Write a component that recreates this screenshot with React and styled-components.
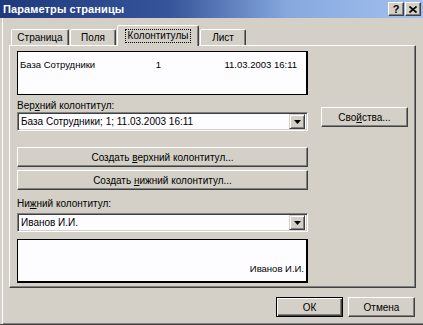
import React from 'react';
import styled, { createGlobalStyle } from 'styled-components';

const GlobalStyle = createGlobalStyle`
  html, body {
    margin: 0;
    padding: 0;
    background: #d4d0c8;
  }
  body {
    font-family: "Liberation Sans", Arial, sans-serif;
    font-size: 10px;
    color: #000;
  }
`;

const Window = styled.div`
  width: 423px;
  height: 325px;
  box-sizing: border-box;
  background: #d4d0c8;
  display: flex;
  flex-direction: column;
  border-bottom: 1px solid #404048;
  box-shadow: inset 2px 0 0 #d4d0c8, inset 3px 0 0 #ffffff, inset 0 -1px 0 #808080;
  overflow: hidden;
`;

const TitleBar = styled.div`
  height: 18px;
  display: flex;
  align-items: center;
  padding: 0 2px 0 3px;
  background: linear-gradient(to right, #1f3a7c 0%, #35549a 40%, #86a8de 68%, #a3c1ef 100%);
`;

const Title = styled.div`
  flex: 1;
  color: #fff;
  font-weight: bold;
  font-size: 11px;
  letter-spacing: 0.1px;
`;

const CaptionButton = styled.div`
  width: 16px;
  height: 14px;
  box-sizing: border-box;
  margin-left: ${p => (p.$gap ? 1 : 0)}px;
  background: #d4d0c8;
  border: 1px solid;
  border-color: #fff #404040 #404040 #fff;
  box-shadow: inset -1px -1px 0 #808080;
  display: flex;
  align-items: center;
  justify-content: center;
  font-weight: bold;
  font-size: 11px;
  line-height: 1;
`;

const TabRow = styled.div`
  display: flex;
  align-items: flex-end;
  gap: 1px;
  height: 20px;
  margin: 7px 0 0 11px;
  position: relative;
  z-index: 1;
`;

const Tab = styled.div`
  width: ${p => p.$width}px;
  height: ${p => (p.$active ? 21 : 16)}px;
  margin-bottom: ${p => (p.$active ? -1 : 0)}px;
  box-sizing: border-box;
  background: #d4d0c8;
  border: 1px solid;
  border-bottom: none;
  border-color: #fff #404040 transparent #fff;
  border-radius: 2px 2px 0 0;
  box-shadow: inset -1px 0 0 #808080;
  display: flex;
  align-items: ${p => (p.$active ? 'flex-start' : 'center')};
  padding-top: ${p => (p.$active ? 3 : 0)}px;
  justify-content: center;
`;

const FocusLabel = styled.span`
  border: 1px dotted #000;
  padding: 0 2px;
  line-height: 12px;
`;

const Panel = styled.div`
  margin: 0 7px 0 9px;
  height: 243px;
  box-sizing: border-box;
  border: 1px solid;
  border-color: #fff #404040 #404040 #fff;
  box-shadow: inset -1px -1px 0 #808080;
  display: flex;
  gap: 13px;
  padding: 5px 0 0 7px;
`;

const LeftColumn = styled.div`
  width: 291px;
  display: flex;
  flex-direction: column;
`;

const RightColumn = styled.div`
  padding-top: 56px;
`;

const Preview = styled.div`
  height: 44px;
  box-sizing: border-box;
  margin-top: ${p => p.$top || 0}px;
  background: #fdfcff;
  border: 1px solid #000;
  border-right-width: 2px;
  border-bottom-width: ${p => (p.$heavy ? 2 : 1)}px;
  display: flex;
  align-items: ${p => (p.$bottom ? 'flex-end' : 'flex-start')};
  justify-content: ${p => (p.$bottom ? 'flex-end' : 'space-between')};
  padding: ${p => (p.$bottom ? '0 2px 7px 0' : '7px 9px 0 2px')};
  font-size: 9.5px;
`;

const PreviewCell = styled.span`
  flex: ${p => (p.$stretch ? 1 : 'none')};
  text-align: ${p => p.$align || 'left'};
`;

const Label = styled.div`
  margin-top: ${p => p.$top}px;
  line-height: 13px;
`;

const Combo = styled.div`
  height: 19px;
  margin-top: ${p => p.$top || 0}px;
  box-sizing: border-box;
  background: #fdfcff;
  border: 1px solid;
  border-color: #808080 #fff #fff #808080;
  box-shadow: inset 1px 1px 0 #404040, inset -1px -1px 0 #d4d0c8;
  display: flex;
  align-items: center;
  padding: 2px 2px 2px 3px;
`;

const ComboText = styled.span`
  flex: 1;
`;

const DropButton = styled.div`
  width: 16px;
  height: 15px;
  box-sizing: border-box;
  background: #d4d0c8;
  border: 1px solid;
  border-color: #d4d0c8 #404040 #404040 #d4d0c8;
  box-shadow: inset 1px 1px 0 #fff, inset -1px -1px 0 #808080;
  display: flex;
  align-items: center;
  justify-content: center;
`;

const Button = styled.div`
  width: ${p => (p.$width ? `${p.$width}px` : 'auto')};
  height: 20px;
  margin-top: ${p => p.$top || 0}px;
  box-sizing: border-box;
  background: #d4d0c8;
  border: 1px solid;
  border-color: ${p => (p.$default ? '#000' : '#fff #404040 #404040 #fff')};
  box-shadow: ${p =>
    p.$default
      ? 'inset 1px 1px 0 #fff, inset -1px -1px 0 #404040, inset -2px -2px 0 #808080'
      : 'inset -1px -1px 0 #808080'};
  display: flex;
  align-items: center;
  justify-content: center;
`;

const ButtonLabel = styled.span`
  white-space: pre;
`;

const Footer = styled.div`
  display: flex;
  justify-content: flex-end;
  gap: 5px;
  padding: 9px 8px 0 0;
`;

const Arrow = () => (
  <svg width="7" height="4" viewBox="0 0 7 4">
    <path d="M0 0h7L3.5 4z" fill="#000" />
  </svg>
);

const CloseGlyph = () => (
  <svg width="8" height="7" viewBox="0 0 8 7">
    <path d="M0.5 0.5L7.5 6.5M7.5 0.5L0.5 6.5" stroke="#000" strokeWidth="1.6" />
  </svg>
);

export default function App() {
  return (
    <>
      <GlobalStyle />
      <Window>
        <TitleBar>
          <Title>Параметры страницы</Title>
          <CaptionButton>?</CaptionButton>
          <CaptionButton $gap>
            <CloseGlyph />
          </CaptionButton>
        </TitleBar>

        <TabRow>
          <Tab $width={58}>Страница</Tab>
          <Tab $width={46}>Поля</Tab>
          <Tab $width={82} $active>
            <FocusLabel>Колонтитулы</FocusLabel>
          </Tab>
          <Tab $width={46}>Лист</Tab>
        </TabRow>

        <Panel>
          <LeftColumn>
            <Preview>
              <PreviewCell $stretch>База Сотрудники</PreviewCell>
              <PreviewCell>1</PreviewCell>
              <PreviewCell $stretch $align="right">11.03.2003 16:11</PreviewCell>
            </Preview>

            <Label $top={4}>
              Вер<u>х</u>ний колонтитул:
            </Label>
            <Combo>
              <ComboText>База Сотрудники; 1; 11.03.2003 16:11</ComboText>
              <DropButton>
                <Arrow />
              </DropButton>
            </Combo>

            <Button $top={16}>
              <ButtonLabel>
                Создать <u>в</u>ерхний колонтитул...
              </ButtonLabel>
            </Button>
            <Button $top={3}>
              <ButtonLabel>
                Создать <u>н</u>ижний колонтитул...
              </ButtonLabel>
            </Button>

            <Label $top={7}>
              Ни<u>ж</u>ний колонтитул:
            </Label>
            <Combo $top={3}>
              <ComboText>Иванов И.И.</ComboText>
              <DropButton>
                <Arrow />
              </DropButton>
            </Combo>

            <Preview $top={7} $bottom $heavy>
              <PreviewCell>Иванов И.И.</PreviewCell>
            </Preview>
          </LeftColumn>

          <RightColumn>
            <Button $width={87}>
              <ButtonLabel>
                Сво<u>й</u>ства...
              </ButtonLabel>
            </Button>
          </RightColumn>
        </Panel>

        <Footer>
          <Button $width={67} $default>
            ОК
          </Button>
          <Button $width={67}>Отмена</Button>
        </Footer>
      </Window>
    </>
  );
}
